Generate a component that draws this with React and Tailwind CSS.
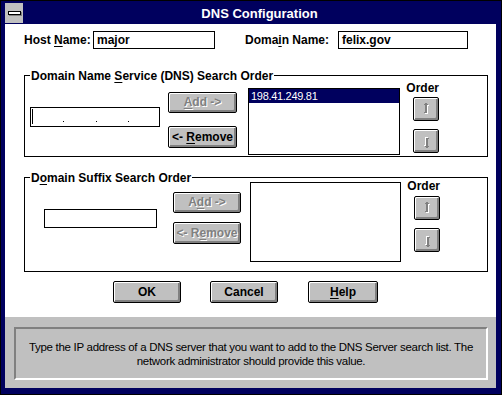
import React from 'react';

const sans = { fontFamily: '"Liberation Sans", Arial, sans-serif' };

const U = ({ children }) => (
  <span className="underline decoration-1 underline-offset-2">{children}</span>
);

// Win 3.1 push button
const Btn = ({ children, w = 'w-[68px]', h = 'h-[22px]', disabled, className = '' }) => (
  <div
    className={`${w} ${h} ${className} shrink-0 flex items-center justify-center rounded-[2px] border border-black bg-[#c0c0c0] shadow-[inset_1px_1px_0_#fff,inset_-2px_-2px_0_#808080] text-[12px] font-bold leading-none ${
      disabled ? 'text-[#808080] [text-shadow:1px_1px_0_#fff]' : 'text-black'
    }`}
  >
    <span className="-mt-[1px]">{children}</span>
  </div>
);

const Arrow = ({ down }) => (
  <svg width="9" height="13" viewBox="0 0 9 13" shapeRendering="crispEdges" className={down ? 'rotate-180' : ''}>
    <g fill="#fff" transform="translate(1 1)">
      <rect x="3" y="0" width="2" height="1" />
      <rect x="2" y="1" width="4" height="1" />
      <rect x="3" y="2" width="2" height="8" />
      <rect x="2" y="9" width="2" height="1" />
    </g>
    <g fill="#808080">
      <rect x="3" y="0" width="2" height="1" />
      <rect x="2" y="1" width="4" height="1" />
      <rect x="3" y="2" width="2" height="8" />
      <rect x="2" y="9" width="2" height="1" />
    </g>
  </svg>
);

const OrderBtn = ({ down, className = '' }) => (
  <div className={`${className} w-[26px] h-[24px] flex items-center justify-center rounded-[2px] border border-black bg-[#c0c0c0] shadow-[inset_1px_1px_0_#fff,inset_-2px_-2px_0_#808080]`}>
    <Arrow down={down} />
  </div>
);

const OrderCol = ({ labelMt, upMt }) => (
  <div className={`ml-[7px] w-[32px] flex flex-col items-end ${labelMt}`}>
    <span className="text-[12px] font-bold leading-[16px]">Order</span>
    <OrderBtn className={upMt} />
    <OrderBtn down className="mt-[8px]" />
  </div>
);

const Group = ({ title, h, children }) => (
  <div className={`relative ml-[19px] w-[464px] ${h} border border-black`}>
    <span className="absolute -top-[8px] left-[5px] bg-white px-[1px] text-[12px] font-bold leading-[16px]">
      {title}
    </span>
    <div className="flex items-start">{children}</div>
  </div>
);

export default function App() {
  return (
    <div
      style={sans}
      className="w-[502px] h-[395px] border border-black bg-[#00005e] pl-[4px] pr-[5px] pt-[2px] pb-[6px] flex flex-col text-black"
    >
      {/* Title bar */}
      <div className="h-[21px] flex items-stretch">
        <div className="w-[18px] mb-[1px] bg-[#c0c0c0] flex items-center justify-center">
          <div className="w-[13px] h-[4px] border border-black bg-white shadow-[1px_1px_0_#808080]" />
        </div>
        <div className="flex-1 flex items-center justify-center text-white text-[13px] font-bold">
          DNS Configuration
        </div>
      </div>

      {/* Dialog body */}
      <div className="bg-white w-[491px] flex flex-col">
        {/* Host / Domain row */}
        <div className="mt-[7px] pl-[19px] flex items-center text-[12px] font-bold">
          <span className="w-[69px]">
            Host <U>N</U>ame:
          </span>
          <div className="w-[122px] h-[18px] border border-black px-[3px] flex items-center">major</div>
          <span className="ml-[30px] w-[93px]">
            Doma<U>i</U>n Name:
          </span>
          <div className="w-[130px] h-[18px] border border-black px-[3px] flex items-center">felix.gov</div>
        </div>

        {/* DNS search order */}
        <div className="mt-[26px]">
          <Group
            h="h-[82px]"
            title={
              <>
                Domain Name <U>S</U>ervice (DNS) Search Order
              </>
            }
          >
            <div className="ml-[5px] mt-[31px] w-[130px] h-[20px] border border-black flex items-start">
              <span className="ml-[1px] mt-[1px] w-[1px] h-[15px] bg-black" />
              <span className="ml-[30px] mt-[13px] w-[1px] h-[1px] bg-black" />
              <span className="ml-[32px] mt-[13px] w-[1px] h-[1px] bg-black" />
              <span className="ml-[31px] mt-[13px] w-[1px] h-[1px] bg-black" />
            </div>
            <div className="ml-[8px] mt-[16px] flex flex-col">
              <Btn w="w-[69px]" h="h-[21px]" disabled>
                <U>A</U>dd -&gt;
              </Btn>
              <Btn w="w-[69px]" className="mt-[13px]">
                &lt;- <U>R</U>emove
              </Btn>
            </div>
            <div className="ml-[11px] mt-[12px] w-[152px] h-[67px] border border-black">
              <div className="h-[14px] bg-[#00005e] text-white text-[11px] tracking-[-0.3px] leading-[14px] pl-[2px]">
                198.41.249.81
              </div>
            </div>
            <OrderCol labelMt="mt-[4px]" upMt="mt-[1px]" />
          </Group>
        </div>

        {/* Domain suffix search order */}
        <div className="mt-[20px]">
          <Group
            h="h-[95px]"
            title={
              <>
                D<U>o</U>main Suffix Search Order
              </>
            }
          >
            <div className="ml-[19px] mt-[31px] w-[113px] h-[19px] border border-black" />
            <div className="ml-[16px] mt-[14px] flex flex-col">
              <Btn h="h-[21px]" disabled>
                A<U>d</U>d -&gt;
              </Btn>
              <Btn className="mt-[9px]" disabled>
                &lt;- R<U>e</U>move
              </Btn>
            </div>
            <div className="ml-[9px] mt-[4px] w-[151px] h-[80px] border border-black" />
            <OrderCol labelMt="mt-0" upMt="mt-[2px]" />
          </Group>
        </div>

        {/* OK / Cancel / Help */}
        <div className="mt-[9px] mb-[14px] pl-[108px] flex">
          <Btn>OK</Btn>
          <Btn className="ml-[29px]">Cancel</Btn>
          <Btn w="w-[70px]" className="ml-[30px]">
            <U>H</U>elp
          </Btn>
        </div>
      </div>

      {/* Status area */}
      <div className="bg-[#c0c0c0] w-[491px] pt-[10px] pl-[9px] pb-[8px]">
        <div className="w-[474px] h-[53px] border-2 border-t-[#808080] border-l-[#808080] border-b-white border-r-white flex items-center justify-center">
          <p className="text-center whitespace-nowrap text-[11.5px] tracking-[-0.3px] leading-[14px] text-black">
            Type the IP address of a DNS server that you want to add to the DNS Server search list. The
            <br />
            network administrator should provide this value.
          </p>
        </div>
      </div>
    </div>
  );
}
